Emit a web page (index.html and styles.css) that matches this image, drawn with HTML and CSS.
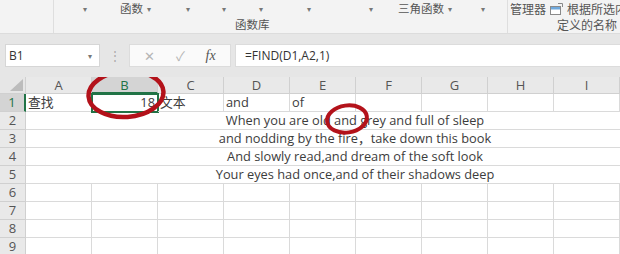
FILE: index.html
```html
<!DOCTYPE html>
<html lang="zh-CN">
<head>
  <meta charset="UTF-8">
  <title>FIND 函数</title>
  <link rel="stylesheet" href="styles.css">
</head>
<body>
  <!-- ribbon: only the bottom of the 公式 tab is visible -->
  <div class="ribbon">
    <div class="group g-left"></div>
    <div class="group g-func">
      <div class="btn-row">
        <span class="dd"></span>
        <span class="dd">函数</span>
        <span class="dd"></span>
        <span class="dd"></span>
        <span class="dd"></span>
        <span class="dd"></span>
        <span class="dd"></span>
        <span class="dd">三角函数</span>
        <span class="dd"></span>
      </div>
      <div class="group-label">函数库</div>
    </div>
    <div class="group g-names">
      <div class="names-row">
        <span>管理器</span>
        <svg class="sel-icon" width="13" height="12" viewBox="0 0 13 12">
          <rect x="0.5" y="3.5" width="10" height="8" fill="#fff" stroke="#8a8a8a"/>
          <rect x="1" y="4" width="9" height="2.5" fill="#6fa8dc"/>
          <path d="M8 0.5 L12.5 0.5 L12.5 4" fill="none" stroke="#8a8a8a"/>
        </svg>
        <span>根据所选内容创建</span>
      </div>
      <div class="group-label">定义的名称</div>
    </div>
  </div>

  <!-- name box + formula bar -->
  <div class="formula-bar">
    <div class="namebox">B1<span class="caret">▾</span></div>
    <div class="dots">⋮</div>
    <div class="fx-box">
      <span class="fx-btn">✕</span>
      <span class="fx-btn">✓</span>
      <span class="fx-btn fx">fx</span>
    </div>
    <div class="formula-input">=FIND(D1,A2,1)</div>
  </div>

  <div class="sheet">
    <div class="corner"></div>
    <div class="col-h">A</div>
    <div class="col-h sel">B</div>
    <div class="col-h">C</div>
    <div class="col-h">D</div>
    <div class="col-h">E</div>
    <div class="col-h">F</div>
    <div class="col-h">G</div>
    <div class="col-h">H</div>
    <div class="col-h">I</div>

    <div class="row-h sel">1</div>
    <div class="cell">查找</div>
    <div class="cell num active">18</div>
    <div class="cell">文本</div>
    <div class="cell">and</div>
    <div class="cell">of</div>
    <div class="cell"></div>
    <div class="cell"></div>
    <div class="cell"></div>
    <div class="cell"></div>

    <div class="row-h">2</div>
    <div class="cell merged">When you are old and grey and full of sleep</div>
    <div class="row-h">3</div>
    <div class="cell merged">and nodding by the fire，take down this book</div>
    <div class="row-h">4</div>
    <div class="cell merged">And slowly read,and dream of the soft look</div>
    <div class="row-h">5</div>
    <div class="cell merged">Your eyes had once,and of their shadows deep</div>

    <div class="row-h">6</div>
    <div class="cell"></div><div class="cell"></div><div class="cell"></div><div class="cell"></div><div class="cell"></div><div class="cell"></div><div class="cell"></div><div class="cell"></div><div class="cell"></div>
    <div class="row-h">7</div>
    <div class="cell"></div><div class="cell"></div><div class="cell"></div><div class="cell"></div><div class="cell"></div><div class="cell"></div><div class="cell"></div><div class="cell"></div><div class="cell"></div>
    <div class="row-h">8</div>
    <div class="cell"></div><div class="cell"></div><div class="cell"></div><div class="cell"></div><div class="cell"></div><div class="cell"></div><div class="cell"></div><div class="cell"></div><div class="cell"></div>
    <div class="row-h">9</div>
    <div class="cell"></div><div class="cell"></div><div class="cell"></div><div class="cell"></div><div class="cell"></div><div class="cell"></div><div class="cell"></div><div class="cell"></div><div class="cell"></div>

    <!-- hand drawn red marks on top of the screenshot -->
    <svg class="marks" width="620" height="180" viewBox="0 0 620 180">
      <ellipse cx="126" cy="17" rx="37.5" ry="23" transform="rotate(-4 126 17)" fill="none" stroke="#b3121a" stroke-width="4.5"/>
      <ellipse cx="347" cy="42" rx="20" ry="13.5" transform="rotate(-8 347 42)" fill="none" stroke="#b3121a" stroke-width="4"/>
    </svg>
  </div>
</body>
</html>
```

FILE: styles.css
```css
* {
  box-sizing: border-box;
}

body, html {
  margin: 0;
  padding: 0;
  width: 620px;
  height: 254px;
  overflow: hidden;
}

body {
  background: #e6e6e6;
  font-family: "Noto Sans CJK SC", "Noto Sans", sans-serif;
  color: #444;
}

/* ribbon */
.ribbon {
  display: flex;
  height: 34px;
  background: #f3f3f3;
  border-bottom: 1px solid #dcdcdc;
  font-size: 11.5px;
  color: #555;
}

.group {
  border-right: 1px solid #dedede;
  height: 33px;
  padding-top: 1px;
}

.g-left { flex: none; width: 54px; }
.g-func { flex: none; width: 454px; }
.g-names { flex: 1; min-width: 0; overflow: hidden; border-right: none; }

.btn-row {
  display: grid;
  grid-template-columns: 37px 66px 36px 37px 48px 62px 29px 83px 1fr;
  height: 15px;
  padding-left: 29px;
  line-height: 14px;
  white-space: nowrap;
}

.btn-row .dd::after {
  content: "▾";
  font-size: 8px;
  color: #777;
  margin-left: 4px;
  vertical-align: 1px;
}

.btn-row .dd:empty::after {
  margin-left: 0;
}

.names-row {
  display: flex;
  align-items: center;
  gap: 3px;
  height: 15px;
  padding-left: 2px;
  white-space: nowrap;
  font-size: 12px;
}

.sel-icon { flex: none; margin: 0 1px; }

.group-label {
  line-height: 17px;
  padding-left: 181px;
  color: #555;
}

.g-names .group-label {
  padding-left: 49px;
  font-size: 12px;
}

/* formula bar */
.formula-bar {
  display: flex;
  align-items: flex-start;
  height: 43px;
  padding: 10px 0 0 5px;
  font-family: "Open Sans", "Noto Sans", sans-serif;
  font-size: 12px;
  color: #333;
}

.namebox {
  display: flex;
  justify-content: space-between;
  align-items: center;
  width: 95px;
  height: 23px;
  padding: 0 7px 0 3px;
  background: #fff;
  border: 1px solid #d6d6d6;
}

.caret {
  font-size: 8px;
  color: #777;
}

.dots {
  width: 29px;
  line-height: 23px;
  text-align: center;
  color: #aaa;
  font-size: 12px;
}

.fx-box {
  display: flex;
  align-items: center;
  justify-content: space-around;
  width: 102px;
  height: 23px;
  padding: 0 4px;
  background: #fafafa;
  border: 1px solid #dcdcdc;
  color: #b5b5b5;
  font-size: 13px;
}

.fx-box .fx {
  font-family: "Liberation Serif", serif;
  font-style: italic;
  color: #555;
  font-size: 14px;
}

.formula-input {
  flex: 1;
  height: 23px;
  line-height: 21px;
  margin-left: 4px;
  padding-left: 9px;
  background: #fff;
  border: 1px solid #dcdcdc;
  border-right: none;
}

/* worksheet */
.sheet {
  position: relative;
  display: grid;
  grid-template-columns: 26px repeat(9, 66px);
  grid-auto-rows: 18px;
  grid-template-rows: 17px;
  background: #fff;
  font-family: "Open Sans", "Noto Sans CJK SC", sans-serif;
  font-size: 12.8px;
  color: #3c3c3c;
}

.corner {
  position: relative;
  background: #e6e6e6;
  border-right: 1px solid #d0d0d0;
  border-bottom: 1px solid #d0d0d0;
}

.corner::after {
  content: "";
  position: absolute;
  right: 2px;
  bottom: 2px;
  border-left: 13px solid transparent;
  border-bottom: 12px solid #bcbcbc;
}

.col-h, .row-h {
  background: #e9e9e9;
  color: #555;
  text-align: center;
  font-size: 13px;
  line-height: 16px;
  border-right: 1px solid #d0d0d0;
  border-bottom: 1px solid #d0d0d0;
}

.row-h { line-height: 17px; }

.col-h.sel {
  background: #d4d4d4;
  color: #217346;
  border-bottom: 2px solid #217346;
}

.row-h.sel {
  background: #d4d4d4;
  color: #217346;
  border-right: 2px solid #217346;
}

.cell {
  padding: 0 2px;
  line-height: 17px;
  white-space: nowrap;
  border-right: 1px solid #dadada;
  border-bottom: 1px solid #dadada;
}

.cell.num { text-align: right; }

.cell.active {
  outline: 2px solid #217346;
  outline-offset: -1px;
}

.cell.merged {
  grid-column: span 9;
  padding-left: 66px;
  text-align: center;
  border-right: none;
}

.marks {
  position: absolute;
  left: 0;
  top: 0;
  pointer-events: none;
}
```
